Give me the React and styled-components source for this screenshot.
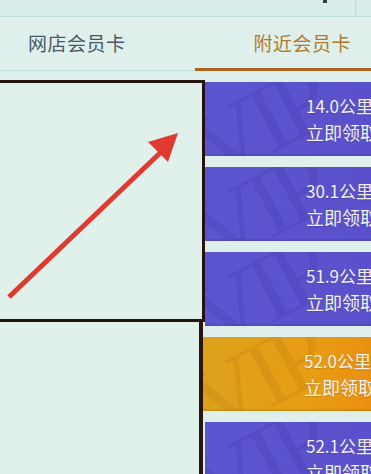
import React from 'react';
import styled, { createGlobalStyle } from 'styled-components';

const GlobalStyle = createGlobalStyle`
  html, body {
    margin: 0;
    padding: 0;
    background: #dff0ec;
    font-family: "Noto Sans CJK SC", "Noto Sans", sans-serif;
  }
`;

const Page = styled.div`
  width: 371px;
  height: 474px;
  overflow: hidden;
  background: #dff0ec;
`;

const TopStrip = styled.div`
  height: 16px;
  border-bottom: 1px solid #bcdeda;
  background: #d9eeea;
  display: flex;
  justify-content: flex-end;
`;

const StripMark = styled.div`
  width: 4px;
  height: 3px;
  background: #3a3a3a;
  margin-right: 28px;
`;

const StripCell = styled.div`
  width: 15px;
  border-left: 1px solid #bcdeda;
`;

const Tabs = styled.div`
  height: 53px;
  display: flex;
  border-bottom: 1px solid #bde0dc;
`;

const Tab = styled.div`
  flex: 1;
  display: flex;
  align-items: center;
  justify-content: ${({ $active }) => ($active ? 'flex-end' : 'flex-start')};
  padding: ${({ $active }) => ($active ? '0 20px 0 0' : '0 0 0 28px')};
  font-size: 19px;
  letter-spacing: 0.5px;
  color: ${({ $active }) => ($active ? '#b07a2a' : '#4a5866')};
  border-bottom: 3px solid ${({ $active }) => ($active ? '#a8651e' : 'transparent')};
  margin-bottom: -1px;
  margin-left: ${({ $active }) => ($active ? '10px' : '0')};
`;

const Body = styled.div`
  display: flex;
  padding-top: 9px;
`;

const LeftPane = styled.div`
  width: 205px;
  flex-shrink: 0;
  display: flex;
  flex-direction: column;
`;

const FrameBox = styled.div`
  position: relative;
  height: 236px;
  border: 3px solid #24140e;
  border-left: none;
  background: #e0f1ec;
`;

const LowerBox = styled.div`
  height: 160px;
  margin-right: 2px;
  border-right: 4px solid #2a160e;
  background: #e0f1ec;
`;

const Arrow = styled.svg`
  position: absolute;
  left: 0;
  top: -3px;
`;

const CardList = styled.div`
  flex: 1;
  display: flex;
  flex-direction: column;
  gap: 11px;
  padding-top: 2px;
`;

const Card = styled.div`
  position: relative;
  height: 74px;
  overflow: hidden;
  background: ${({ $gold }) =>
    $gold
      ? 'linear-gradient(90deg, #dca21c 0%, #e89d14 60%, #ea8e10 100%)'
      : 'linear-gradient(90deg, #5d55cf 0%, #5a50cb 100%)'};
  margin-left: ${({ $gold }) => ($gold ? '-2px' : '0')};
  box-shadow: inset 0 -2px 0 rgba(0, 0, 0, 0.08);
`;

const Watermark = styled.div`
  position: absolute;
  left: -14px;
  top: -6px;
  font-family: "Liberation Serif", serif;
  font-size: 96px;
  line-height: 1;
  transform: rotate(-28deg);
  color: ${({ $gold }) => ($gold ? 'rgba(160, 100, 20, 0.16)' : 'rgba(60, 50, 160, 0.2)')};
  letter-spacing: -6px;
`;

const CardText = styled.div`
  position: relative;
  padding: 10px 0 0 101px;
  color: #f4f2ee;
  white-space: nowrap;
  line-height: 27px;
  text-shadow: 0 1px 1px rgba(0, 0, 0, 0.15);
`;

const Distance = styled.div`
  font-size: 17px;
`;

const Claim = styled.div`
  font-size: 18px;
`;

const cards = [
  { km: '14.0' },
  { km: '30.1' },
  { km: '51.9' },
  { km: '52.0', gold: true },
  { km: '52.1' },
];

export default function App() {
  return (
    <Page>
      <GlobalStyle />
      <TopStrip>
        <StripMark />
        <StripCell />
      </TopStrip>
      <Tabs>
        <Tab>网店会员卡</Tab>
        <Tab $active>附近会员卡</Tab>
      </Tabs>
      <Body>
        <LeftPane>
          <FrameBox>
            <Arrow width="205" height="240" viewBox="0 0 205 240">
              <line x1="9" y1="217" x2="160" y2="73" stroke="#e0392f" strokeWidth="5" />
              <polygon points="178,53 148,62 168,82" fill="#e0392f" />
            </Arrow>
          </FrameBox>
          <LowerBox />
        </LeftPane>
        <CardList>
          {cards.map((c) => (
            <Card key={c.km} $gold={c.gold}>
              <Watermark $gold={c.gold}>VIP</Watermark>
              <CardText>
                <Distance>{c.km}公里</Distance>
                <Claim>立即领取</Claim>
              </CardText>
            </Card>
          ))}
        </CardList>
      </Body>
    </Page>
  );
}
